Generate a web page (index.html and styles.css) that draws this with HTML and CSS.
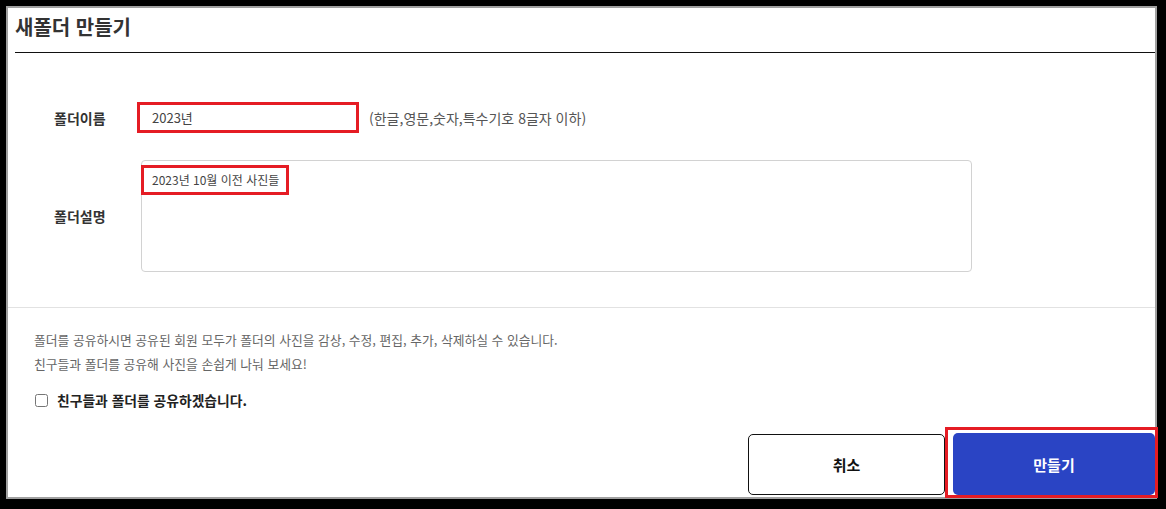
FILE: index.html
```html
<!DOCTYPE html>
<html lang="ko">
<head>
    <meta charset="UTF-8">
    <title>새폴더 만들기</title>
    <link rel="stylesheet" href="styles.css">
</head>
<body>
    <div class="dialog">
        <div class="dialog-head">
            <h1>새폴더 만들기</h1>
        </div>

        <div class="form">
            <div class="row">
                <label class="label" for="name">폴더이름</label>
                <input id="name" class="name-input" type="text" value="2023년">
                <span class="hint">(한글,영문,숫자,특수기호 8글자 이하)</span>
            </div>
            <div class="row row-desc">
                <span class="label">폴더설명</span>
                <div class="desc-box">
                    <span class="desc-text">2023년 10월 이전 사진들</span>
                </div>
            </div>
        </div>

        <div class="share">
            <p>폴더를 공유하시면 공유된 회원 모두가 폴더의 사진을 감상, 수정, 편집, 추가, 삭제하실 수 있습니다.</p>
            <p>친구들과 폴더를 공유해 사진을 손쉽게 나눠 보세요!</p>
            <label class="check">
                <input type="checkbox">
                <span>친구들과 폴더를 공유하겠습니다.</span>
            </label>
        </div>

        <div class="actions">
            <button class="btn btn-cancel">취소</button>
            <span class="mark">
                <button class="btn btn-create">만들기</button>
            </span>
        </div>
    </div>
</body>
</html>
```

FILE: styles.css
```css
html, body {
    margin: 0;
    height: 509px;
    overflow: hidden;
}
body {
    background: #000;
    padding: 8px 11px 12px 8px;
    box-sizing: border-box;
    font-family: "Noto Sans CJK KR", "Noto Sans", sans-serif;
    color: #333;
}
.dialog {
    background: #fff;
    height: 489px;
    box-shadow: 0 0 0 2px #a0a0a0;
    display: flex;
    flex-direction: column;
}
.dialog-head {
    margin-left: 7px;
    height: 44px;
    border-bottom: 1.5px solid #111;
    display: flex;
    align-items: center;
}
.dialog-head h1 {
    margin: 0;
    font-size: 20px;
    font-weight: bold;
    color: #333;
    position: relative;
    top: -4px;
}
.form {
    padding: 49px 0 35px 46px;
    border-bottom: 1px solid #e2e2e2;
}
.row {
    display: flex;
    align-items: center;
}
.label {
    width: 83px;
    font-size: 14px;
    font-weight: bold;
    color: #333;
}
.name-input {
    width: 222px;
    height: 31px;
    box-sizing: border-box;
    border: 3px solid #e51c24;
    padding: 0 0 0 12px;
    font-family: inherit;
    font-size: 13px;
    color: #444;
    outline: none;
}
.hint {
    margin-left: 10px;
    font-size: 14px;
    color: #555;
}
.row-desc {
    margin-top: 27px;
}
.desc-box {
    margin-left: 4px;
    width: 831px;
    height: 112px;
    box-sizing: border-box;
    border: 1px solid #d2d2d2;
    border-radius: 4px;
}
.desc-text {
    display: inline-block;
    margin: 4px 0 0 -1px;
    padding: 3px 7px 4px 8px;
    border: 3px solid #e51c24;
    font-size: 12px;
    color: #444;
    line-height: 17px;
}
.share {
    padding: 20px 0 0 26px;
}
.share p {
    margin: 0;
    font-size: 12.8px;
    line-height: 24px;
    color: #666;
}
.check {
    display: flex;
    align-items: center;
    margin-top: 14px;
    font-size: 13.8px;
    font-weight: bold;
    color: #222;
}
.check input {
    margin: 0 9px 0 1px;
    width: 13px;
    height: 13px;
}
.actions {
    margin-top: auto;
    display: flex;
    justify-content: flex-end;
    align-items: flex-end;
    margin-bottom: -1px;
}
.btn {
    height: 62px;
    border-radius: 5px;
    font-family: inherit;
    font-size: 15px;
    font-weight: bold;
    cursor: pointer;
}
.btn-cancel {
    width: 197px;
    height: 61px;
    margin-bottom: 3px;
    background: #fff;
    border: 1px solid #111;
    color: #111;
}
.mark {
    display: flex;
    border: 3px solid #e51c24;
    padding: 3px 0 0 5px;
    margin-right: -3px;
}
.btn-create {
    width: 202px;
    background: #2a44c4;
    border: none;
    color: #fff;
}
```
